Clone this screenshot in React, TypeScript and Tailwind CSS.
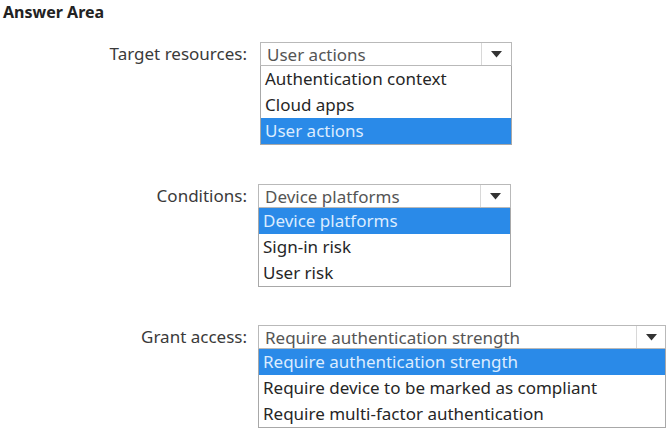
const font = { fontFamily: '"Noto Sans", "Open Sans", sans-serif' };

type DropProps = {
  label: string;
  value: string;
  options: string[];
  selected: number;
  boxClass: string;
  arrowClass: string;
};

function Arrow() {
  return (
    <svg width="11" height="7" viewBox="0 0 11 7">
      <path d="M0 0 L11 0 L5.5 6.5 Z" fill="#333" />
    </svg>
  );
}

function Dropdown({ label, value, options, selected, boxClass, arrowClass }: DropProps) {
  return (
    <div className="flex items-start">
      <div className="w-[248px] shrink-0 h-[24px] text-right text-[17px] leading-[24px] text-[#3a3a3a] pr-[1px] whitespace-nowrap">
        {label}
      </div>
      <div className={boxClass}>
        <div className="flex h-[24px] border border-[#b9b9b9] bg-white">
          <div className="flex-1 px-[6px] text-[17px] leading-[24px] text-[#555] whitespace-nowrap overflow-hidden">
            {value}
          </div>
          <div className={arrowClass}>
            <Arrow />
          </div>
        </div>
        <div className="border border-t-0 border-[#a8a8a8] bg-white">
          {options.map((opt, i) => (
            <div
              key={opt}
              className={
                i === selected
                  ? "h-[26px] px-[4px] text-[17px] leading-[26px] bg-[#2a8ae8] text-[#dcecff] whitespace-nowrap"
                  : "h-[26px] px-[4px] text-[17px] leading-[26px] text-[#262626] whitespace-nowrap"
              }
            >
              {opt}
            </div>
          ))}
        </div>
      </div>
    </div>
  );
}

export default function App() {
  return (
    <div className="w-[671px] h-[429px] bg-white overflow-hidden relative" style={font}>
      <div className="pl-[3px] pt-[2px] text-[16px] leading-[20px] font-bold text-[#222]">Answer Area</div>
      <div className="flex flex-col mt-[20px]">
        <Dropdown
          label="Target resources:"
          value="User actions"
          options={["Authentication context", "Cloud apps", "User actions"]}
          selected={2}
          boxClass="ml-[12px] w-[252px]"
          arrowClass="w-[30px] border-l border-[#d8d8d8] flex items-center justify-center"
        />
        <div className="mt-[39px]">
          <Dropdown
            label="Conditions:"
            value="Device platforms"
            options={["Device platforms", "Sign-in risk", "User risk"]}
            selected={0}
            boxClass="ml-[10px] w-[253px]"
            arrowClass="w-[30px] border-l border-[#d8d8d8] flex items-center justify-center"
          />
        </div>
        <div className="mt-[38px]">
          <Dropdown
            label="Grant access:"
            value="Require authentication strength"
            options={[
              "Require authentication strength",
              "Require device to be marked as compliant",
              "Require multi-factor authentication",
            ]}
            selected={0}
            boxClass="ml-[10px] w-[408px]"
            arrowClass="w-[29px] border-l border-[#d8d8d8] flex items-center justify-center"
          />
        </div>
      </div>
    </div>
  );
}
